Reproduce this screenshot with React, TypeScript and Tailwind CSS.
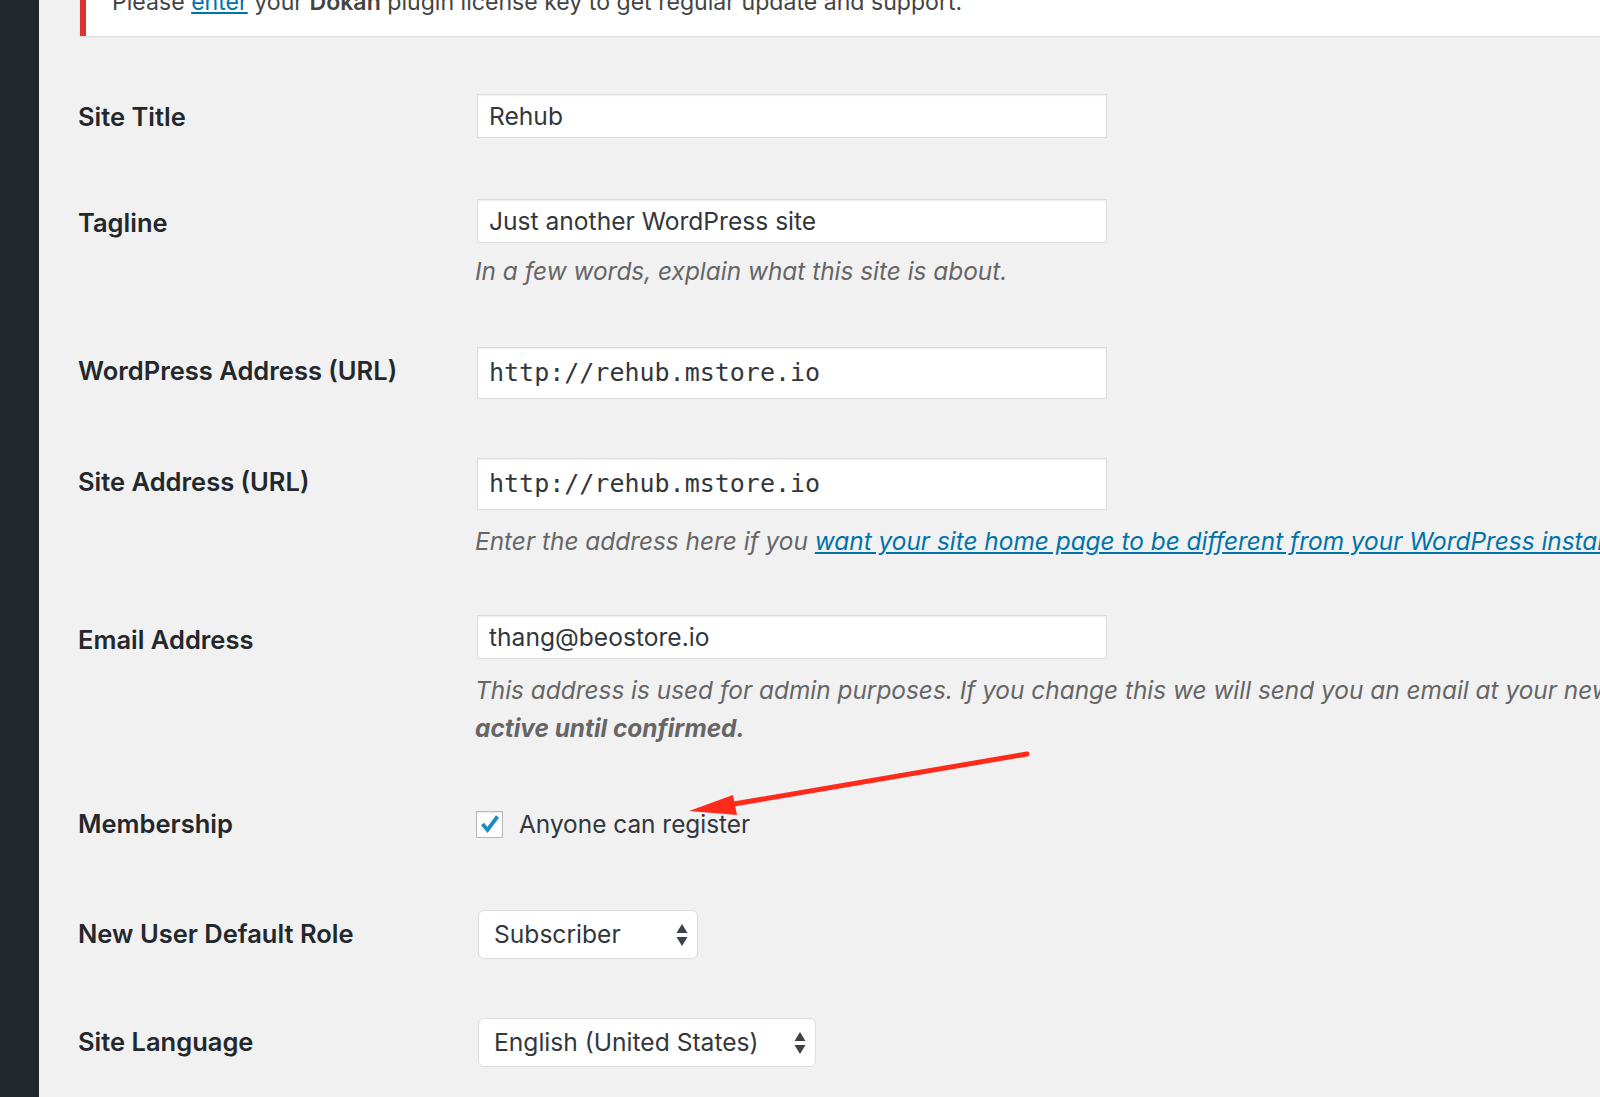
import React, { useState } from "react";

const sans = "font-['Inter','Noto_Sans',sans-serif]";

const Label: React.FC<{ text: string; h: number }> = ({ text, h }) => (
  <div
    className="w-[399px] shrink-0 flex items-center text-[25.5px] font-semibold text-[#23282d]"
    style={{ height: h }}
  >
    {text}
  </div>
);

const TextInput: React.FC<{ value: string; mono?: boolean }> = ({ value, mono }) => (
  <div
    className={`w-[630px] bg-white border border-[#dcdcdc] shadow-[inset_0_1px_2px_rgba(0,0,0,0.07)] flex items-center pl-[11px] text-[#32373c] ${
      mono
        ? "h-[52px] font-['DejaVu_Sans_Mono',monospace] text-[25px]"
        : "h-[44px] text-[24.6px]"
    }`}
  >
    {value}
  </div>
);

const Desc: React.FC<{ children: React.ReactNode; className?: string }> = ({ children, className }) => (
  <p className={`italic text-[24.4px] text-[#666666] whitespace-nowrap -ml-[2px] ${className ?? ""}`}>{children}</p>
);

const SelectBox: React.FC<{ value: string; w: number }> = ({ value, w }) => (
  <div
    className="h-[49px] bg-white border border-[#dddddd] rounded-[6px] flex items-center justify-between pl-[15px] pr-[9px] text-[24.6px] text-[#32373c]"
    style={{ width: w }}
  >
    <span>{value}</span>
    <svg width="12" height="24" viewBox="0 0 12 24">
      <polygon points="6,1 11.5,10 0.5,10" fill="#3c434a" />
      <polygon points="0.5,14 11.5,14 6,23" fill="#3c434a" />
    </svg>
  </div>
);

export default function App() {
  const [checked, setChecked] = useState(true);

  return (
    <div className={`relative w-[1600px] h-[1097px] overflow-hidden bg-[#f1f1f1] flex ${sans}`}>
      {/* admin sidebar */}
      <div className="w-[39px] shrink-0 bg-[#23282d]" />

      <div className="flex-1 pl-[41px] min-w-0">
        {/* license notice */}
        <div className="-mt-[30px] h-[66px] w-[1600px] bg-white border-l-[6px] border-[#dc3232] shadow-[0_1px_2px_rgba(0,0,0,0.1)] pl-[26px] pt-[14px] text-[23.1px] leading-[36px] text-[#444444] whitespace-nowrap">
          Please <a className="text-[#0073aa] underline">enter</a> your <b className="font-semibold">Dokan</b> plugin
          license key to get regular update and support.
        </div>

        {/* Site Title */}
        <div className="flex mt-[58px] -ml-[2px]">
          <Label text="Site Title" h={46} />
          <TextInput value="Rehub" />
        </div>

        {/* Tagline */}
        <div className="flex mt-[59px] -ml-[2px]">
          <Label text="Tagline" h={48} />
          <div>
            <TextInput value="Just another WordPress site" />
            <Desc className="mt-[10px] leading-[36px]">In a few words, explain what this site is about.</Desc>
          </div>
        </div>

        {/* WordPress Address */}
        <div className="flex mt-[58px] -ml-[2px]">
          <Label text="WordPress Address (URL)" h={48} />
          <TextInput value="http://rehub.mstore.io" mono />
        </div>

        {/* Site Address */}
        <div className="flex mt-[59px] -ml-[2px]">
          <Label text="Site Address (URL)" h={48} />
          <div>
            <TextInput value="http://rehub.mstore.io" mono />
            <Desc className="mt-[13px] leading-[36px]">
              Enter the address here if you{" "}
              <a className="text-[#0073aa] underline">
                want your site home page to be different from your WordPress installation directory
              </a>
              .
            </Desc>
          </div>
        </div>

        {/* Email */}
        <div className="flex mt-[56px] -ml-[2px]">
          <Label text="Email Address" h={50} />
          <div>
            <TextInput value="thang@beostore.io" />
            <Desc className="mt-[12px] leading-[38px]">
              This address is used for admin purposes. If you change this we will send you an email at your new
              address to confirm it. <b className="font-bold">The new address will not become</b>
              <br />
              <b className="font-bold">active until confirmed.</b>
            </Desc>
          </div>
        </div>

        {/* Membership */}
        <div className="flex items-center h-[28px] mt-[63px] -ml-[2px]">
          <Label text="Membership" h={28} />
          <label className="flex items-center gap-[16px] h-[28px] text-[24.4px] text-[#32373c] -ml-[1px]">
            <button
              onClick={() => setChecked(!checked)}
              className="w-[27px] h-[27px] bg-white border border-[#b4b9be] shadow-[inset_0_1px_2px_rgba(0,0,0,0.1)] flex items-center justify-center"
            >
              {checked && (
                <svg width="20" height="20" viewBox="0 0 20 20">
                  <path d="M2.5 10 L7.5 16 L17.5 2.5" fill="none" stroke="#1e8cbe" strokeWidth="3.8" strokeLinejoin="miter" />
                </svg>
              )}
            </button>
            Anyone can register
          </label>
        </div>

        {/* Default role */}
        <div className="flex mt-[72px] -ml-[2px]">
          <Label text="New User Default Role" h={49} />
          <div className="ml-[1px]">
            <SelectBox value="Subscriber" w={220} />
          </div>
        </div>

        {/* Language */}
        <div className="flex mt-[59px] -ml-[2px]">
          <Label text="Site Language" h={49} />
          <div className="ml-[1px]">
            <SelectBox value="English (United States)" w={338} />
          </div>
        </div>
      </div>

      {/* red annotation arrow */}
      <svg className="absolute inset-0 pointer-events-none" width="1600" height="1097" viewBox="0 0 1600 1097">
        <line x1="1027" y1="754" x2="728" y2="805" stroke="#fe2a1c" strokeWidth="5" strokeLinecap="round" />
        <polygon points="689,811 733,795 737,815" fill="#fe2a1c" />
      </svg>
    </div>
  );
}
